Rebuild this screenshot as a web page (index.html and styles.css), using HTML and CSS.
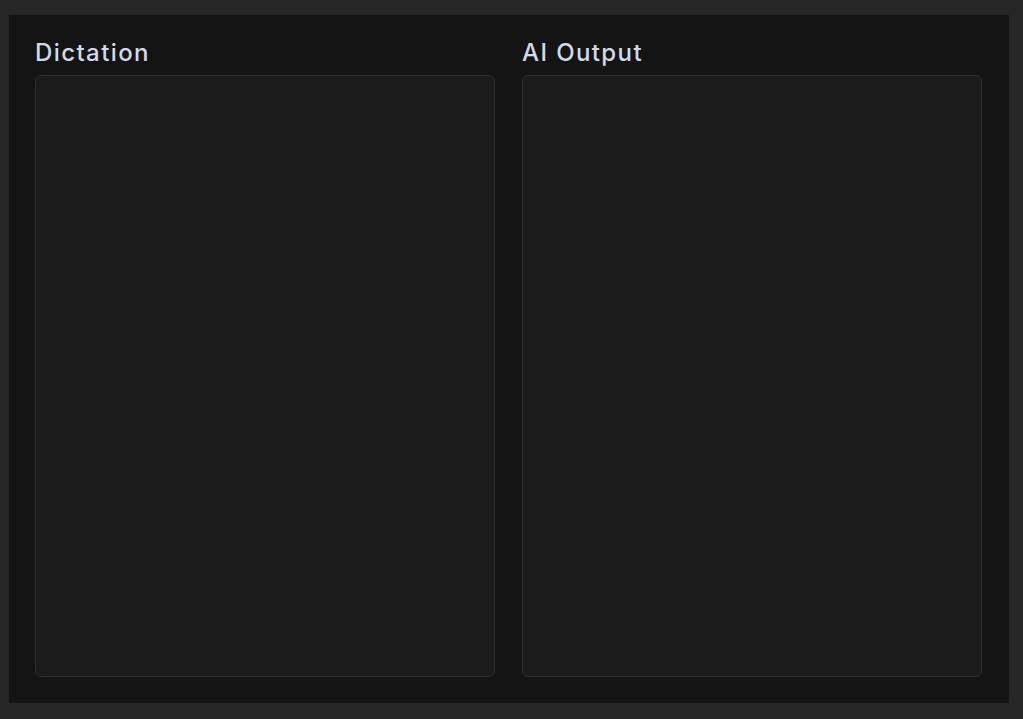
FILE: index.html
```html
<!DOCTYPE html>
<html>
<head>
<meta charset="utf-8">
<link rel="stylesheet" href="styles.css">
</head>
<body>
<main class="panel">
  <section class="col">
    <h2 class="title">Dictation</h2>
    <div class="box"></div>
  </section>
  <section class="col">
    <h2 class="title">AI Output</h2>
    <div class="box"></div>
  </section>
</main>
</body>
</html>
```
FILE: styles.css
```css
html, body {
  margin: 0;
  height: 100%;
}
body {
  background: #262626;
  padding: 15px 14px 16px 9px;
  box-sizing: border-box;
  font-family: Inter, "Noto Sans", sans-serif;
}
.panel {
  height: 100%;
  background: #141414;
  box-sizing: border-box;
  padding: 23px 27px 26px 26px;
  display: grid;
  grid-template-columns: 1fr 1fr;
  gap: 27px;
}
.col {
  display: flex;
  flex-direction: column;
  min-height: 0;
}
.title {
  margin: 0 0 8px 0;
  font-size: 24px;
  line-height: 29px;
  font-weight: 500;
  color: #d1dbe8;
  letter-spacing: 1.4px;
}
.box {
  flex: 1;
  background: #1b1b1b;
  border: 1px solid #2f2f2f;
  border-radius: 6px;
}
```
